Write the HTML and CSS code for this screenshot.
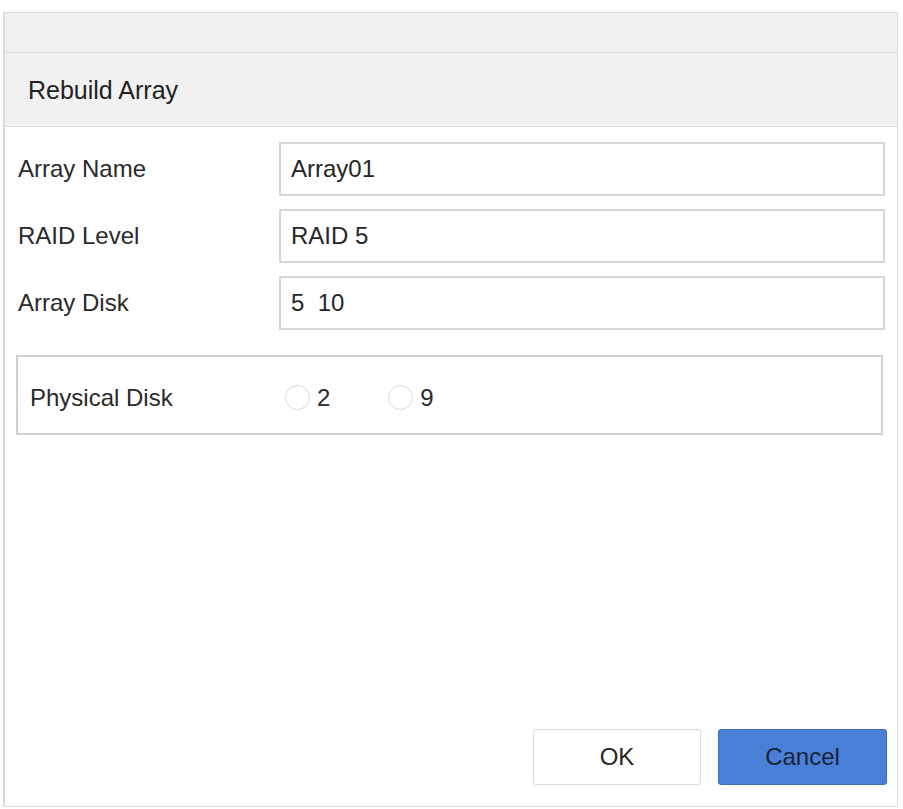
FILE: index.html
```html
<!DOCTYPE html>
<html lang="en">
<head>
  <meta charset="UTF-8">
  <title>Rebuild Array</title>
  <link rel="stylesheet" href="styles.css">
</head>
<body>

  <div class="dialog">
    <div class="topbar"></div>
    <div class="titlebar">Rebuild Array</div>

    <div class="content">
      <div class="row">
        <label>Array Name</label>
        <div class="field">Array01</div>
      </div>
      <div class="row">
        <label>RAID Level</label>
        <div class="field">RAID 5</div>
      </div>
      <div class="row">
        <label>Array Disk</label>
        <div class="field">5&nbsp;&nbsp;10</div>
      </div>

      <div class="disks">
        <span class="disks-label">Physical Disk</span>
        <span class="radio"><i></i>2</span>
        <span class="radio"><i></i>9</span>
      </div>
    </div>

    <div class="footer">
      <button class="btn">OK</button>
      <button class="btn btn-primary">Cancel</button>
    </div>
  </div>

</body>
</html>
```

FILE: styles.css
```css
body {
  margin: 0;
  background: #fff;
  font-family: "Liberation Sans", Arial, sans-serif;
  color: #2a2a2a;
}
.dialog {
  margin: 12px 0 0 3px;
  width: 895px;
  height: 795px;
  box-sizing: border-box;
  border: 1px solid #dadada;
  border-left-width: 2px;
  display: flex;
  flex-direction: column;
  background: #fff;
}
.topbar {
  height: 39px;
  background: #f1f1f1;
  border-bottom: 1px solid #dcdcdc;
}
.titlebar {
  height: 73px;
  background: #f1f1f1;
  border-bottom: 1px solid #dcdcdc;
  padding-left: 23px;
  padding-top: 2px;
  box-sizing: border-box;
  height: 74px;
  display: flex;
  align-items: center;
  font-size: 25px;
  color: #222;
}
.content {
  flex: 1;
  padding: 15px 12px 0 13px;
  display: flex;
  flex-direction: column;
  gap: 13px;
}
.row {
  display: flex;
  align-items: center;
  height: 54px;
  font-size: 24px;
}
.row label {
  width: 261px;
  flex: none;
}
.field {
  flex: 1;
  height: 54px;
  box-sizing: border-box;
  border: 2px solid #d6d6d6;
  padding-left: 10px;
  display: flex;
  align-items: center;
  color: #262626;
}
.disks {
  margin: 12px 2px 0 -2px;
  height: 80px;
  box-sizing: border-box;
  border: 2px solid #d2d2d2;
  display: flex;
  align-items: center;
  padding: 5px 0 0 12px;
  font-size: 24px;
}
.disks-label {
  width: 255px;
}
.radio {
  display: inline-flex;
  align-items: center;
  gap: 7px;
  margin-right: 58px;
}
.radio i {
  width: 23px;
  height: 23px;
  border: 1px solid #dadada;
  border-radius: 50%;
}
.footer {
  display: flex;
  justify-content: flex-end;
  gap: 17px;
  padding: 0 10px 21px 0;
}
.btn {
  width: 168px;
  height: 56px;
  border: 1px solid #dcdcdc;
  border-radius: 3px;
  background: #fff;
  font-family: "Liberation Sans", Arial, sans-serif;
  font-size: 24px;
  color: #262626;
}
.btn-primary {
  width: 169px;
  background: #4a7fd8;
  border-color: #3f6fc0;
  color: #17233a;
}
```
